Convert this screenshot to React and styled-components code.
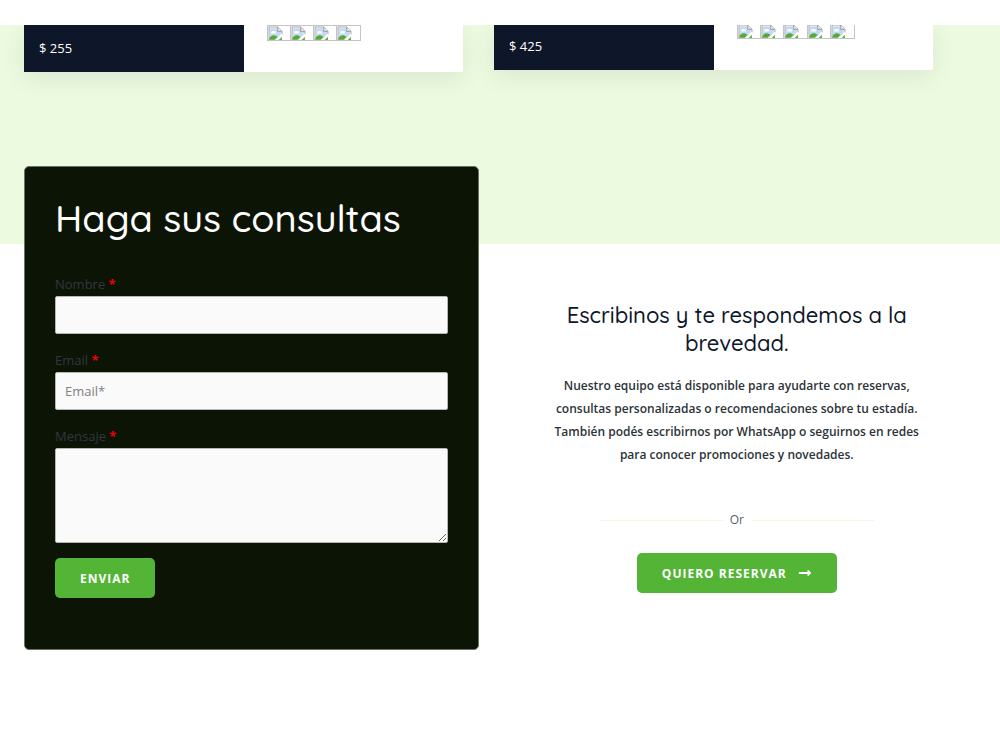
import { useState } from 'react'
import styled, { createGlobalStyle } from 'styled-components'
import { FaLongArrowAltRight } from 'react-icons/fa'

const colors = {
  white: '#fff',
  navy: '#0e1629',
  mint: '#ecfae0',
  forest: '#0c1405',
  forestEdge: '#6b7166',
  green: '#54b435',
  field: '#fafafa',
  label: '#2e3840',
  text: '#2b3438',
  muted: '#55606b',
  required: '#f00000',
}

const rooms = [
  { id: 1, price: '$ 255', stars: 4, starsWidth: 94, raised: false },
  { id: 2, price: '$ 425', stars: 5, starsWidth: 118, raised: true },
]

const BrokenImage = () => (
  <svg width='15' height='15' viewBox='0 0 14 14' aria-hidden='true'>
    <path d='M1 1h8l4 4v8H1z' fill='#fff' />
    <path d='M2 2h7v3h3v3L8 12H2z' fill='#c3d9f7' />
    <path d='M3 6a2 2 0 0 1 3-1 1 1 0 0 1 1 2H3z' fill='#fff' />
    <path d='M1 12c1-3 4-4 6-3l2 1-3 3H1z' fill='#4fae2f' />
    <path d='M1 13V1h8l4 4v3' fill='none' stroke='#a4a8ac' />
    <path d='M9 1v4h4' fill='#e8e8e8' stroke='#a4a8ac' />
    <path d='M7 13l6-6v2l-4 4z' fill='#fff' />
    <path d='M10 13h3v-3z' fill='#58b338' />
    <path d='M1 13h6' stroke='#a4a8ac' />
  </svg>
)

const App = () => {
  const [formState, setFormState] = useState({
    name: '',
    email: '',
    message: '',
  })

  const handleChange = (e) => {
    const { name, value } = e.target
    setFormState((prevState) => ({
      ...prevState,
      [name]: value,
    }))
  }

  return (
    <Page>
      <GlobalStyle />
      <Rooms>
        {rooms.map((room) => (
          <RoomCard key={room.id} $raised={room.raised}>
            <Price>{room.price}</Price>
            <RoomInfo>
              <Stars $width={room.starsWidth}>
                {Array.from({ length: room.stars }, (_, i) => (
                  <Star key={i}>
                    <BrokenImage />
                  </Star>
                ))}
              </Stars>
            </RoomInfo>
          </RoomCard>
        ))}
      </Rooms>
      <Contact>
        <Form onSubmit={(e) => e.preventDefault()}>
          <Title>Haga sus consultas</Title>
          <Label htmlFor='name'>
            Nombre <Required>*</Required>
          </Label>
          <Input
            id='name'
            name='name'
            type='text'
            value={formState.name}
            onChange={handleChange}
          />
          <Label htmlFor='email'>
            Email <Required>*</Required>
          </Label>
          <Input
            id='email'
            name='email'
            type='email'
            value={formState.email}
            onChange={handleChange}
            placeholder='Email*'
          />
          <Label htmlFor='message'>
            Mensaje <Required>*</Required>
          </Label>
          <TextArea
            id='message'
            name='message'
            value={formState.message}
            onChange={handleChange}
          />
          <Button type='submit'>ENVIAR</Button>
        </Form>
        <Aside>
          <Subtitle>Escribinos y te respondemos a la brevedad.</Subtitle>
          <Text>
            Nuestro equipo está disponible para ayudarte con reservas, consultas
            personalizadas o recomendaciones sobre tu estadía. También podés
            escribirnos por WhatsApp o seguirnos en redes para conocer
            promociones y novedades.
          </Text>
          <Divider>Or</Divider>
          <ButtonLink href='#reservar'>
            QUIERO RESERVAR
            <FaLongArrowAltRight size={14} />
          </ButtonLink>
        </Aside>
      </Contact>
    </Page>
  )
}

const GlobalStyle = createGlobalStyle`
  * {
    box-sizing: border-box;
  }

  body {
    margin: 0;

    font-family: 'Open Sans', sans-serif;
    font-size: 13px;

    color: ${colors.text};
    background: ${colors.white};
  }
`

const Page = styled.main`
  padding: 25px 0 100px;
`

const Rooms = styled.section`
  display: grid;
  grid-template-columns: 1fr 1fr;
  align-items: start;
  gap: 31px;
  padding: 0 67px 172px 24px;
  overflow: hidden;

  background: ${colors.mint};
`

const RoomCard = styled.article`
  display: grid;
  grid-template-columns: 1fr 1fr;
  height: 47px;
  margin-top: ${(props) => (props.$raised ? '-2px' : '0')};

  background: ${colors.white};
  box-shadow: 0 6px 24px rgba(0, 0, 0, 0.08);
`

const Price = styled.div`
  padding: 14px 15px;

  font-weight: 500;
  line-height: 18px;

  color: ${colors.white};
  background: ${colors.navy};
`

const RoomInfo = styled.div`
  padding: 0 23px;
`

const Stars = styled.div`
  display: flex;
  width: ${(props) => props.$width}px;
  height: 16px;

  border: 1px solid #c4c4c4;
  border-left: 0;
`

const Star = styled.span`
  flex: 1;
  overflow: hidden;

  border-left: 1px solid #c4c4c4;

  svg {
    display: block;
  }
`

const Contact = styled.section`
  display: grid;
  grid-template-columns: 1fr 1fr;
  align-items: start;
  margin-top: -78px;
  padding: 0 67px 0 24px;
`

const Form = styled.form`
  padding: 29px 30px 51px;

  border: 1px solid ${colors.forestEdge};
  border-radius: 5px;
  background: ${colors.forest};
`

const Title = styled.h2`
  margin: 0 0 32px;

  font-family: Quicksand, Lato, sans-serif;
  font-weight: 500;
  font-size: 38px;
  line-height: 44px;

  color: ${colors.white};
`

const Label = styled.label`
  display: block;

  line-height: 24px;

  color: ${colors.label};
`

const Required = styled.span`
  font-weight: 700;

  color: ${colors.required};
`

const Input = styled.input`
  display: block;
  width: 100%;
  height: 38px;
  margin-bottom: 14px;
  padding: 0 9px;

  font-family: inherit;
  font-size: 13px;

  color: ${colors.text};
  border: 1px solid #b5b8b2;
  border-radius: 2px;
  background: ${colors.field};

  &::placeholder {
    color: #808080;
  }
`

const TextArea = styled(Input).attrs({ as: 'textarea' })`
  height: 95px;
  margin-bottom: 15px;
  padding: 9px;

  resize: vertical;
`

const Button = styled.button`
  display: inline-flex;
  align-items: center;
  justify-content: center;
  gap: 11px;
  height: 40px;
  padding: 0 25px;

  font-family: inherit;
  font-weight: 700;
  font-size: 12px;
  letter-spacing: 1px;
  text-decoration: none;

  color: ${colors.white};
  border: 0;
  border-radius: 5px;
  background: ${colors.green};

  cursor: pointer;
`

const ButtonLink = styled(Button).attrs({ as: 'a' })``

const Aside = styled.div`
  display: flex;
  flex-direction: column;
  align-items: center;
  padding: 135px 0 0 62px;

  text-align: center;
`

const Subtitle = styled.h3`
  margin: 0 0 17px;

  font-family: Quicksand, Lato, sans-serif;
  font-weight: 500;
  font-size: 22px;
  line-height: 28px;

  color: ${colors.navy};
`

const Text = styled.p`
  margin: 0 0 44px;

  font-weight: 600;
  font-size: 12px;
  line-height: 23px;
`

const Divider = styled.div`
  display: flex;
  align-items: center;
  gap: 7px;
  width: 70%;
  margin-bottom: 23px;

  font-size: 12px;
  line-height: 20px;

  color: ${colors.muted};

  &::before,
  &::after {
    content: '';
    flex: 1;
    height: 1px;

    background: ${colors.mint};
  }
`

export default App
